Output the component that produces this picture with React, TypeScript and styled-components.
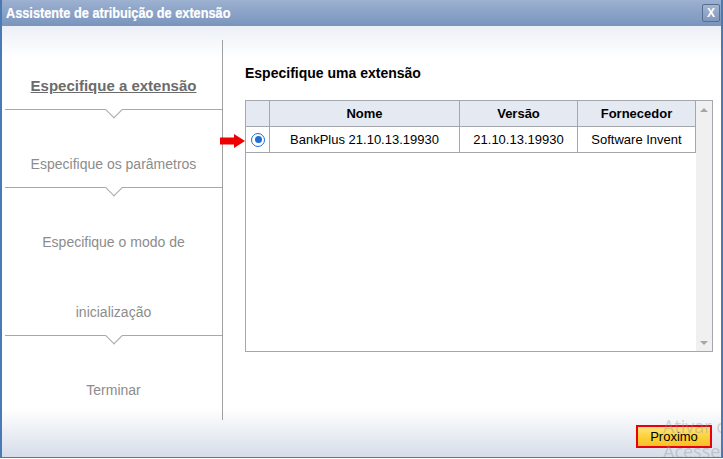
import React from 'react';
import styled, { createGlobalStyle } from 'styled-components';

const GlobalStyle = createGlobalStyle`
  html, body {
    margin: 0;
    padding: 0;
    background: #ffffff;
  }
  body {
    font-family: "Liberation Sans", Arial, sans-serif;
  }
`;

const Window = styled.div`
  position: relative;
  width: 723px;
  height: 458px;
  box-sizing: border-box;
  border-left: 2px solid #4a7ab4;
  border-right: 2px solid #4a7ab4;
  border-bottom: 1px solid #4a7ab4;
  display: flex;
  flex-direction: column;
  overflow: hidden;
  background: linear-gradient(
    to bottom,
    #dce3ee 0px,
    #ffffff 58px,
    #ffffff 408px,
    #d6dde9 100%
  );
`;

const TitleBar = styled.div`
  height: 26px;
  flex: none;
  display: flex;
  align-items: center;
  justify-content: space-between;
  padding: 0 1px 0 4px;
  background: linear-gradient(to bottom, #9db1d0 0%, #8aa2c6 50%, #7995bd 100%);
`;

// the original uses a narrow bold face; squeeze the regular one to the same width
const Title = styled.div`
  color: #ffffff;
  font-family: "Liberation Sans", Arial, sans-serif;
  font-weight: bold;
  font-size: 14px;
  -webkit-text-stroke: 0.2px #ffffff;
  transform: scaleX(0.91);
  transform-origin: left center;
  white-space: nowrap;
`;

const CloseButton = styled.div`
  width: 16px;
  height: 16px;
  border: 1px solid #5b6d8c;
  border-radius: 2px;
  background: linear-gradient(to bottom, #a3b5d2, #8098bd);
  color: #ffffff;
  font-family: "Liberation Sans", sans-serif;
  font-weight: bold;
  font-size: 12px;
  line-height: 16px;
  text-align: center;
`;

const Main = styled.div`
  height: 394px;
  flex: none;
  display: flex;
  padding: 14px 0 0 3px;
  box-sizing: border-box;
`;

const Sidebar = styled.div`
  width: 219px;
  height: 380px;
  box-sizing: border-box;
  border-right: 1px solid #a0a0a0;
  display: flex;
  flex-direction: column;
`;

const Step = styled.div<{ $top: number }>`
  padding-top: ${(p) => p.$top}px;
  padding-bottom: 1px;
  text-align: center;
`;

const StepLabel = styled.div<{ $active?: boolean }>`
  font-family: "Liberation Sans", Arial, sans-serif;
  font-size: ${(p) => (p.$active ? 15 : 14)}px;
  line-height: 70px;
  margin-bottom: -13px;
  color: ${(p) => (p.$active ? '#6b6b6b' : '#8c8c8c')};
  font-weight: ${(p) => (p.$active ? 'bold' : 'normal')};
  text-decoration: ${(p) => (p.$active ? 'underline' : 'none')};
  padding: 0 8px;
`;

const Divider = styled.div`
  position: relative;
  height: 0;
  border-top: 1px solid #a8a8a8;

  &::after {
    content: '';
    position: absolute;
    left: 50%;
    top: -6px;
    width: 11px;
    height: 11px;
    margin-left: -6px;
    background: #ffffff;
    border-right: 1px solid #a8a8a8;
    border-bottom: 1px solid #a8a8a8;
    transform: rotate(45deg);
  }
`;

const Content = styled.div`
  flex: 1;
  padding: 26px 8px 0 22px;
`;

const Heading = styled.div`
  font-family: "Liberation Sans", Arial, sans-serif;
  font-weight: bold;
  font-size: 14px;
  line-height: 15px;
  color: #000000;
  margin-bottom: 19px;
`;

const TableWrap = styled.div`
  position: relative;
`;

const TableBox = styled.div`
  width: 468px;
  height: 252px;
  box-sizing: border-box;
  border: 1px solid #a4a8ac;
  display: flex;
  background: #ffffff;
`;

const Grid = styled.div`
  flex: 1;
  display: grid;
  grid-template-columns: 24px 190px 118px 118px;
  grid-auto-rows: 26px;
  align-content: start;
`;

const Cell = styled.div<{ $head?: boolean }>`
  box-sizing: border-box;
  border-right: 1px solid #a4a8ac;
  border-bottom: 1px solid #a4a8ac;
  display: flex;
  align-items: center;
  justify-content: center;
  font-family: "Liberation Sans", Arial, sans-serif;
  font-size: 13px;
  color: #000000;
  white-space: nowrap;
  overflow: hidden;
  background: ${(p) => (p.$head ? '#e5eaf2' : '#ffffff')};
  font-weight: ${(p) => (p.$head ? 'bold' : 'normal')};
`;

const Scrollbar = styled.div`
  width: 16px;
  background: #f0f0f0;
  display: flex;
  flex-direction: column;
  justify-content: space-between;
  align-items: center;
  padding: 7px 0 6px;
  box-sizing: border-box;
`;

const ScrollArrow = styled.div<{ $down?: boolean }>`
  width: 0;
  height: 0;
  border-left: 4px solid transparent;
  border-right: 4px solid transparent;
  ${(p) =>
    p.$down ? 'border-top: 4px solid #a6a6a6;' : 'border-bottom: 4px solid #a6a6a6;'}
`;

const Radio = styled.span`
  width: 14px;
  height: 14px;
  margin-left: 1px;
  box-sizing: border-box;
  border-radius: 50%;
  border: 1.5px solid #1f6fd6;
  display: flex;
  align-items: center;
  justify-content: center;

  &::after {
    content: '';
    width: 7px;
    height: 7px;
    border-radius: 50%;
    background: #1f6fd6;
  }
`;

const Pointer = styled.svg`
  position: absolute;
  left: -25px;
  top: 34px;
`;

const Footer = styled.div`
  flex: 1;
  display: flex;
  justify-content: flex-end;
  align-items: flex-start;
  padding: 5px 9px 0 0;
`;

const NextButton = styled.button`
  width: 76px;
  height: 23px;
  box-sizing: border-box;
  border: 2px solid #e8000b;
  background: linear-gradient(to bottom, #fde47a 0%, #fcd23e 50%, #f7c125 100%);
  font-family: "Liberation Sans", Arial, sans-serif;
  font-size: 13px;
  color: #000000;
  padding: 0;
  cursor: pointer;
`;

const Watermark = styled.div`
  position: absolute;
  left: 661px;
  top: 414px;
  font-family: "Open Sans", "Liberation Sans", sans-serif;
  font-size: 18px;
  line-height: 25px;
  color: rgba(150, 150, 150, 0.4);
  white-space: nowrap;
  pointer-events: none;
`;

const rows = [
  { name: 'BankPlus 21.10.13.19930', version: '21.10.13.19930', vendor: 'Software Invent' },
];

export default function App() {
  return (
    <>
      <GlobalStyle />
      <Window>
        <TitleBar>
          <Title>Assistente de atribuição de extensão</Title>
          <CloseButton>X</CloseButton>
        </TitleBar>
        <Main>
          <Sidebar>
            <Step $top={11}>
              <StepLabel $active>Especifique a extensão</StepLabel>
            </Step>
            <Divider />
            <Step $top={19}>
              <StepLabel>Especifique os parâmetros</StepLabel>
            </Step>
            <Divider />
            <Step $top={19}>
              <StepLabel>
                Especifique o modo de
                <br />
                inicialização
              </StepLabel>
            </Step>
            <Divider />
            <Step $top={19}>
              <StepLabel>Terminar</StepLabel>
            </Step>
          </Sidebar>
          <Content>
            <Heading>Especifique uma extensão</Heading>
            <TableWrap>
              <Pointer width="25" height="14" viewBox="0 0 25 14">
                <rect x="0" y="3.5" width="15" height="7" fill="#ee0000" />
                <polygon points="14,0 25,7 14,14" fill="#ee0000" />
              </Pointer>
              <TableBox>
                <Grid>
                  <Cell $head />
                  <Cell $head>Nome</Cell>
                  <Cell $head>Versão</Cell>
                  <Cell $head>Fornecedor</Cell>
                  {rows.map((r) => (
                    <React.Fragment key={r.name}>
                      <Cell>
                        <Radio />
                      </Cell>
                      <Cell>{r.name}</Cell>
                      <Cell>{r.version}</Cell>
                      <Cell>{r.vendor}</Cell>
                    </React.Fragment>
                  ))}
                </Grid>
                <Scrollbar>
                  <ScrollArrow />
                  <ScrollArrow $down />
                </Scrollbar>
              </TableBox>
            </TableWrap>
          </Content>
        </Main>
        <Footer>
          <NextButton>Proximo</NextButton>
        </Footer>
        <Watermark>
          Ativar o Windows
          <br />
          Acesse Configurações
        </Watermark>
      </Window>
    </>
  );
}
